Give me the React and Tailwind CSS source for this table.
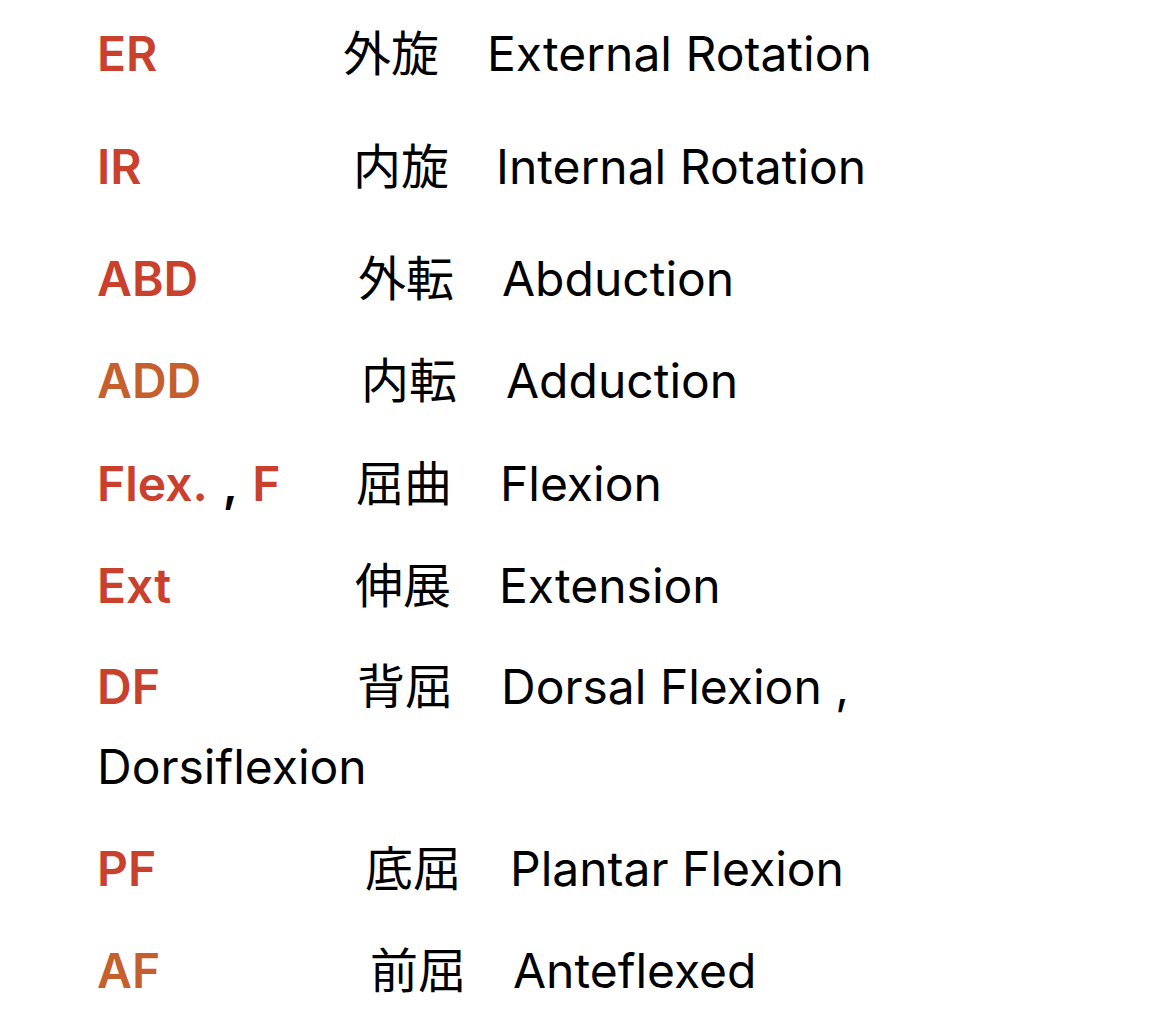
const rows = [
  { abbr: [{ t: "ER", c: "red" }], jp: "外旋", en: "External Rotation", a: "w-[246px]", j: "w-[144px]", mt: "mt-[14px]" },
  { abbr: [{ t: "IR", c: "red" }], jp: "内旋", en: "Internal Rotation", a: "w-[256px]", j: "w-[143px]", mt: "mt-[33px]" },
  { abbr: [{ t: "ABD", c: "red" }], jp: "外転", en: "Abduction", a: "w-[261px]", j: "w-[144px]", mt: "mt-[32px]" },
  { abbr: [{ t: "ADD", c: "orange" }], jp: "内転", en: "Adduction", a: "w-[264px]", j: "w-[145px]", mt: "mt-[22px]" },
  {
    abbr: [
      { t: "Flex.", c: "red" },
      { t: " , ", c: "comma" },
      { t: "F", c: "red" },
    ],
    jp: "屈曲",
    en: "Flexion",
    a: "w-[259px]",
    j: "w-[144px]",
    mt: "mt-[23px]",
  },
  { abbr: [{ t: "Ext", c: "red" }], jp: "伸展", en: "Extension", a: "w-[258px]", j: "w-[144px]", mt: "mt-[22px]" },
  { abbr: [{ t: "DF", c: "red" }], jp: "背屈", en: "Dorsal Flexion , Dorsiflexion", a: "w-[260px]", j: "w-[144px]", mt: "mt-[21px]" },
  { abbr: [{ t: "PF", c: "red" }], jp: "底屈", en: "Plantar Flexion", a: "w-[268px]", j: "w-[145px]", mt: "mt-[22px]" },
  { abbr: [{ t: "AF", c: "orange" }], jp: "前屈", en: "Anteflexed", a: "w-[273px]", j: "w-[143px]", mt: "mt-[22px]" },
];

const colors = {
  red: "text-[#c9402d] font-semibold",
  orange: "text-[#c65f2e] font-semibold",
  comma: "text-black font-semibold px-[3px]",
};

export default function App() {
  return (
    <div className="min-h-screen bg-white text-black px-[97px] font-['Inter','Noto_Sans_CJK_JP',sans-serif] text-[48px] leading-[80px]">
      {rows.map((r, i) => (
        <p key={i} className={r.mt}>
          <span className={`inline-block ${r.a}`}>
            {r.abbr.map((s, k) => (
              <span key={k} className={colors[s.c]}>
                {s.t}
              </span>
            ))}
          </span>
          <span className={`inline-block ${r.j} leading-[60px] font-['Noto_Sans_CJK_JP',sans-serif]`}>
            {r.jp}
          </span>
          {r.en}
        </p>
      ))}
    </div>
  );
}
